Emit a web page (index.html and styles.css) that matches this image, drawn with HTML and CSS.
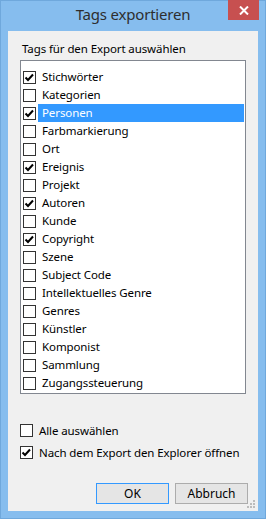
FILE: index.html
```html
<!DOCTYPE html>
<html lang="de">
<head>
  <meta charset="UTF-8" />
  <title>Tags exportieren</title>
  <link rel="stylesheet" href="styles.css">
</head>
<body>
  <div class="window">
    <div class="titlebar">
      <span></span>
      <div class="title">Tags exportieren</div>
      <div class="close">
        <svg width="10" height="9" viewBox="0 0 10 9"><path d="M1 0.5 L9 8.5 M9 0.5 L1 8.5" stroke="#fff" stroke-width="2"/></svg>
      </div>
    </div>

    <div class="client">
      <div class="caption">Tags für den Export auswählen</div>

      <div class="listbox" id="tags"></div>

      <label class="option"><span class="box"></span>Alle auswählen</label>
      <label class="option"><span class="box checked"></span>Nach dem Export den Explorer öffnen</label>

      <div class="buttons">
        <button class="btn default">OK</button>
        <button class="btn">Abbruch</button>
      </div>

      <svg class="grip" width="8" height="8" viewBox="0 0 8 8">
        <rect x="6" y="0" width="2" height="2" fill="#bcbcbc"/>
        <rect x="3" y="3" width="2" height="2" fill="#bcbcbc"/>
        <rect x="6" y="3" width="2" height="2" fill="#bcbcbc"/>
        <rect x="0" y="6" width="2" height="2" fill="#bcbcbc"/>
        <rect x="3" y="6" width="2" height="2" fill="#bcbcbc"/>
        <rect x="6" y="6" width="2" height="2" fill="#bcbcbc"/>
      </svg>
    </div>
  </div>

  <script>
    const tags = [
      ["Stichwörter", true], ["Kategorien", false], ["Personen", true],
      ["Farbmarkierung", false], ["Ort", false], ["Ereignis", true],
      ["Projekt", false], ["Autoren", true], ["Kunde", false],
      ["Copyright", true], ["Szene", false], ["Subject Code", false],
      ["Intellektuelles Genre", false], ["Genres", false], ["Künstler", false],
      ["Komponist", false], ["Sammlung", false], ["Zugangssteuerung", false]
    ];
    const selected = 2;

    const list = document.getElementById("tags");
    tags.forEach((t, i) => {
      const row = document.createElement("div");
      row.className = "item";
      const box = document.createElement("span");
      box.className = t[1] ? "box checked" : "box";
      const text = document.createElement("span");
      text.className = i === selected ? "text selected" : "text";
      text.innerText = t[0];
      row.appendChild(box);
      row.appendChild(text);
      list.appendChild(row);
    });
  </script>
</body>
</html>
```

FILE: styles.css
```css
html, body {
  margin: 0;
  padding: 0;
}
body {
  width: 266px;
  height: 519px;
  overflow: hidden;
  font-family: "Noto Sans", "Open Sans", sans-serif;
  font-size: 11.5px;
  letter-spacing: -0.1px;
  color: #000;
}
.window {
  width: 266px;
  height: 519px;
  box-sizing: border-box;
  background: #86bdee;
  border: 1px solid #6fa8dc;
  display: flex;
  flex-direction: column;
}
.titlebar {
  height: 30px;
  display: grid;
  grid-template-columns: 1fr auto 1fr;
  align-items: start;
}
.title {
  font-size: 15px;
  letter-spacing: -0.2px;
  line-height: 20px;
  padding-top: 3px;
  color: #2e2e2e;
  white-space: nowrap;
}
.close {
  justify-self: end;
  margin-top: -1px;
  margin-right: 6px;
  width: 31px;
  height: 20px;
  background: #c75050;
  display: flex;
  align-items: center;
  justify-content: center;
}
.client {
  position: relative;
  margin: 0 7px;
  height: 480px;
  box-sizing: border-box;
  background: #f0f0f0;
  padding: 10px 10px 0 12px;
}
.caption {
  line-height: 16px;
  padding-left: 2px;
  margin-bottom: 3px;
}
.listbox {
  width: 226px;
  height: 334px;
  box-sizing: border-box;
  border: 1px solid #828790;
  background: #fff;
  padding: 7px 1px 0 2px;
  overflow: hidden;
}
.item {
  height: 18px;
  display: flex;
  align-items: center;
}
.box {
  width: 13px;
  height: 13px;
  box-sizing: border-box;
  border: 1px solid #333;
  background: #fff;
  flex: none;
}
.box.checked {
  background: #fff url("data:image/svg+xml,%3Csvg xmlns='http://www.w3.org/2000/svg' width='11' height='11'%3E%3Cpath d='M1.5 5.5 L4 8 L9 2.5' fill='none' stroke='%23000' stroke-width='2'/%3E%3C/svg%3E") no-repeat center;
}
.text {
  flex: 1;
  margin-left: 2px;
  padding-left: 4px;
  height: 18px;
  line-height: 18px;
  white-space: nowrap;
}
.text.selected {
  background: #3399ff;
  color: #fff;
}
.option {
  display: flex;
  align-items: center;
  gap: 6px;
  height: 22px;
  white-space: nowrap;
}
.listbox + .option {
  margin-top: 25px;
}
.buttons {
  display: flex;
  justify-content: flex-end;
  gap: 6px;
  margin-top: 20px;
}
.btn {
  width: 73px;
  height: 21px;
  padding: 0;
  font-family: inherit;
  font-size: 12px;
  color: #000;
  background: #e5e5e5;
  border: 1px solid #acacac;
}
.btn.default {
  border-color: #3399ff;
}
.grip {
  position: absolute;
  right: 3px;
  bottom: 3px;
}
```
